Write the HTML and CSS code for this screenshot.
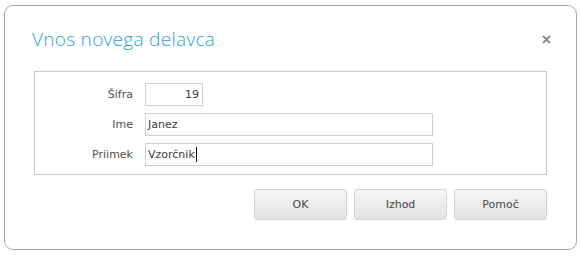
FILE: index.html
```html
<!DOCTYPE html>
<html lang="sl">
<head>
<meta charset="utf-8">
<title>Vnos novega delavca</title>
<link rel="stylesheet" href="styles.css">
</head>
<body>
<div class="dialog">
  <div class="header">
    <h1 class="title">Vnos novega delavca</h1>
    <button class="close" aria-label="Zapri">
      <svg width="9" height="9" viewBox="0 0 9 9"><path d="M1 1L8 8M8 1L1 8" stroke="#8a8a8a" stroke-width="1.8" fill="none"/></svg>
    </button>
  </div>
  <div class="form-box">
    <div class="row">
      <label class="label">Šifra</label>
      <div class="field field-short num">19</div>
    </div>
    <div class="row">
      <label class="label">Ime</label>
      <div class="field field-long">Janez</div>
    </div>
    <div class="row">
      <label class="label">Priimek</label>
      <div class="field field-long">Vzorčnik<span class="caret"></span></div>
    </div>
  </div>
  <div class="buttons">
    <button class="btn">OK</button>
    <button class="btn">Izhod</button>
    <button class="btn">Pomoč</button>
  </div>
</div>
</body>
</html>
```
FILE: styles.css
```css
html, body {
  margin: 0;
  padding: 0;
  background: #ffffff;
}
body {
  font-family: "DejaVu Sans", sans-serif;
  font-size: 11px;
  color: #444444;
}
.dialog {
  box-sizing: border-box;
  margin: 5px 0 0 4px;
  width: 573px;
  height: 245px;
  border: 1px solid #a8a8a8;
  border-radius: 9px;
  padding: 0 29px 0 29px;
  background: #ffffff;
}
.header {
  display: flex;
  align-items: center;
  justify-content: space-between;
  height: 65px;
}
.title {
  margin: 0 0 0 -2px;
  font-family: "Open Sans", sans-serif;
  font-weight: 300;
  font-size: 19px;
  letter-spacing: 0.3px;
  color: #29a3e0;
}
.close {
  border: 0;
  background: none;
  padding: 0;
  margin: 1px -4px 0 0;
  width: 9px;
  height: 9px;
  display: flex;
}
.form-box {
  border: 1px solid #cacaca;
  padding-top: 11px;
  box-sizing: border-box;
  height: 104px;
  display: flex;
  flex-direction: column;
  gap: 7px;
}
.row {
  display: flex;
  align-items: center;
  gap: 12px;
}
.label {
  width: 98px;
  text-align: right;
  color: #505050;
}
.field {
  box-sizing: border-box;
  height: 23px;
  border: 1px solid #cfcfcf;
  padding: 0 2px;
  display: flex;
  align-items: center;
  color: #3c3c3c;
}
.field-short {
  width: 58px;
  justify-content: flex-end;
  padding-right: 3px;
}
.field-long {
  width: 288px;
}
.caret {
  display: inline-block;
  width: 1px;
  height: 15px;
  background: #000000;
  margin-left: 1px;
}
.buttons {
  display: flex;
  justify-content: flex-end;
  gap: 7px;
  margin-top: 14px;
}
.btn {
  box-sizing: border-box;
  width: 93px;
  height: 31px;
  border: 1px solid #d2d2d2;
  border-radius: 3px;
  background: linear-gradient(#f6f6f6, #e3e3e3);
  font-family: "DejaVu Sans", sans-serif;
  font-size: 11px;
  color: #484848;
  padding: 0;
}
```
